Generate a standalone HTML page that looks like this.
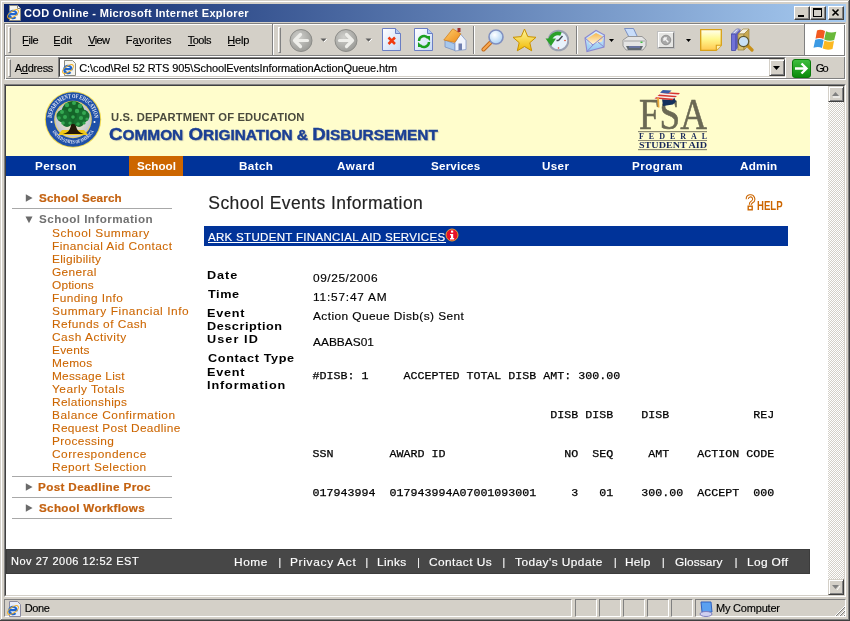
<!DOCTYPE html><html><head><meta charset="utf-8"><style>
*{margin:0;padding:0;box-sizing:border-box}
html,body{width:850px;height:621px;overflow:hidden;background:#d4d0c8;font-family:"Liberation Sans",sans-serif}
.a{position:absolute}
.t{position:absolute;white-space:pre;line-height:normal;-webkit-font-smoothing:antialiased}
.mono{position:absolute;white-space:pre;font-family:"Liberation Mono",monospace;font-size:11.667px;line-height:13px;color:#000;-webkit-text-stroke:0.25px #000}
</style></head><body><div class="a" style="left:0;top:0;width:850px;height:621px;will-change:transform"><div class="a" style="left:0px;top:0px;width:850px;height:621px;background:#d4d0c8"></div>
<div class="a" style="left:1px;top:1px;width:848px;height:1px;background:#fff"></div>
<div class="a" style="left:1px;top:1px;width:1px;height:618px;background:#fff"></div>
<div class="a" style="left:0px;top:620px;width:850px;height:1px;background:#404040"></div>
<div class="a" style="left:849px;top:0px;width:1px;height:621px;background:#404040"></div>
<div class="a" style="left:1px;top:619px;width:848px;height:1px;background:#808080"></div>
<div class="a" style="left:848px;top:1px;width:1px;height:619px;background:#808080"></div>
<div class="a" style="left:4px;top:4px;width:842px;height:18px;background:linear-gradient(to right,#0a246a,#a6caf0)"></div>
<svg class="a" style="left:6px;top:5px" width="16" height="16" viewBox="0 0 16 16">
<path d="M3.5 0.5h8l3 3v12h-11z" fill="#f4f4ee" stroke="#8a8a80"/>
<path d="M11.5 0.5v3h3" fill="#fff" stroke="#8a8a80"/>
<path d="M3.2 9.2h7.4a3.7 3.7 0 1 0-1.1 2.9" fill="none" stroke="#1f66d0" stroke-width="2.2"/>
<ellipse cx="7" cy="9" rx="6.3" ry="3" transform="rotate(-35 7 9)" fill="none" stroke="#f0b028" stroke-width="1"/>
</svg>
<div class="a" style="left:794px;top:6px;width:16px;height:14px;background:#d4d0c8;border-top:1px solid #fff;border-left:1px solid #fff;border-right:1px solid #404040;border-bottom:1px solid #404040;box-shadow:inset -1px -1px 0 #808080"></div>
<svg class="a" style="left:794px;top:6px" width="16" height="14" viewBox="0 0 16 14"><rect x="4" y="9" width="6" height="2" fill="#000"/></svg>
<div class="a" style="left:810px;top:6px;width:16px;height:14px;background:#d4d0c8;border-top:1px solid #fff;border-left:1px solid #fff;border-right:1px solid #404040;border-bottom:1px solid #404040;box-shadow:inset -1px -1px 0 #808080"></div>
<svg class="a" style="left:810px;top:6px" width="16" height="14" viewBox="0 0 16 14"><rect x="3.5" y="2.5" width="8" height="8" fill="none" stroke="#000"/><rect x="3" y="2" width="9" height="2" fill="#000"/></svg>
<div class="a" style="left:828px;top:6px;width:16px;height:14px;background:#d4d0c8;border-top:1px solid #fff;border-left:1px solid #fff;border-right:1px solid #404040;border-bottom:1px solid #404040;box-shadow:inset -1px -1px 0 #808080"></div>
<svg class="a" style="left:828px;top:6px" width="16" height="14" viewBox="0 0 16 14"><path d="M4.5 3.5l6 6M10.5 3.5l-6 6" stroke="#000" stroke-width="1.6"/></svg>
<div class="a" style="left:4px;top:23px;width:841px;height:56px;border-top:1px solid #808080;border-left:1px solid #808080;border-right:1px solid #808080;border-bottom:1px solid #808080"></div>
<div class="a" style="left:5px;top:24px;width:841px;height:56px;border-top:1px solid #fff;border-left:1px solid #fff;border-right:1px solid #fff;border-bottom:1px solid #fff"></div>
<div class="a" style="left:5px;top:55px;width:840px;height:1px;background:#808080"></div>
<div class="a" style="left:5px;top:56px;width:840px;height:1px;background:#fff"></div>
<div class="a" style="left:8px;top:27px;width:3px;height:26px;border-left:1px solid #fff;border-top:1px solid #fff;border-right:1px solid #808080;border-bottom:1px solid #808080"></div>
<div class="a" style="left:8px;top:59px;width:3px;height:18px;border-left:1px solid #fff;border-top:1px solid #fff;border-right:1px solid #808080;border-bottom:1px solid #808080"></div>
<div class="a" style="left:278px;top:27px;width:3px;height:26px;border-left:1px solid #fff;border-top:1px solid #fff;border-right:1px solid #808080;border-bottom:1px solid #808080"></div>
<div class="a" style="left:272px;top:24px;width:1px;height:31px;background:#808080"></div>
<div class="a" style="left:273px;top:24px;width:1px;height:31px;background:#fff"></div>
<div class="a" style="left:804px;top:24px;width:1px;height:31px;background:#808080"></div>
<div class="a" style="left:805px;top:24px;width:1px;height:31px;background:#fff"></div>
<div class="a" style="left:806px;top:24px;width:38px;height:31px;background:#fff"></div>
<div class="a" style="left:23px;top:45px;width:6px;height:1px;background:#000"></div>
<div class="a" style="left:54px;top:45px;width:6px;height:1px;background:#000"></div>
<div class="a" style="left:88px;top:45px;width:7px;height:1px;background:#000"></div>
<div class="a" style="left:135px;top:45px;width:6px;height:1px;background:#000"></div>
<div class="a" style="left:188px;top:45px;width:7px;height:1px;background:#000"></div>
<div class="a" style="left:228px;top:45px;width:7px;height:1px;background:#000"></div>
<div class="a" style="left:21px;top:73px;width:7px;height:1px;background:#000"></div>
<svg class="a" style="left:289px;top:29px" width="24" height="23" viewBox="0 0 24 23"><defs><radialGradient id="gb" cx="0.4" cy="0.35" r="0.7"><stop offset="0" stop-color="#d0d0cc"/><stop offset="1" stop-color="#999995"/></radialGradient></defs><circle cx="12" cy="11.5" r="11" fill="url(#gb)" stroke="#8c8c88"/><path d="M18.5 11.5H6M11.5 5.5l-6 6 6 6" stroke="#eeeeea" stroke-width="3.2" fill="none" stroke-linejoin="round" stroke-linecap="round"/></svg>
<svg class="a" style="left:320px;top:38px" width="7" height="5"><path d="M0.5 0.5h6l-3 3z" fill="#606060"/><path d="M4 4l3-3" stroke="#fff" stroke-width="1"/></svg>
<svg class="a" style="left:334px;top:29px" width="24" height="23" viewBox="0 0 24 23"><circle cx="12" cy="11.5" r="11" fill="url(#gb)" stroke="#8c8c88"/><path d="M5.5 11.5H18M12.5 5.5l6 6-6 6" stroke="#eeeeea" stroke-width="3.2" fill="none" stroke-linejoin="round" stroke-linecap="round"/></svg>
<svg class="a" style="left:365px;top:38px" width="7" height="5"><path d="M0.5 0.5h6l-3 3z" fill="#606060"/><path d="M4 4l3-3" stroke="#fff" stroke-width="1"/></svg>
<svg class="a" style="left:382px;top:28px" width="20" height="24" viewBox="0 0 20 24"><defs><linearGradient id="pg" x1="0" y1="0" x2="1" y2="1"><stop offset="0" stop-color="#ffffff"/><stop offset="1" stop-color="#c8daf6"/></linearGradient></defs><path d="M0.5 0.5h13l5 5v17h-18z" fill="url(#pg)" stroke="#6a7ec4"/><path d="M13.5 0.5v5h5" fill="#b0c8f0" stroke="#6a7ec4"/><path d="M6.5 9.5l6.5 6.5M13 9.5l-6.5 6.5" stroke="#f03a10" stroke-width="2.5"/></svg>
<svg class="a" style="left:414px;top:28px" width="20" height="24" viewBox="0 0 20 24"><path d="M0.5 0.5h13l5 5v17h-18z" fill="url(#pg)" stroke="#6a7ec4"/><path d="M13.5 0.5v5h5" fill="#b0c8f0" stroke="#6a7ec4"/><path d="M5 13a5 5 0 0 1 9-3" stroke="#1aa020" stroke-width="2.4" fill="none"/><path d="M15 14a5 5 0 0 1-9 3" stroke="#1aa020" stroke-width="2.4" fill="none"/><path d="M11 8h5v5z" fill="#1aa020"/><path d="M9 19H4v-5z" fill="#1aa020"/></svg>
<svg class="a" style="left:443px;top:27px" width="24" height="25" viewBox="0 0 24 25"><defs><linearGradient id="rf" x1="0" y1="0" x2="1" y2="1"><stop offset="0" stop-color="#fcd070"/><stop offset="1" stop-color="#f08a18"/></linearGradient></defs><path d="M2 13l10 4v6.5L2 20z" fill="#a8c8ec" stroke="#7890c0" stroke-width="0.8"/><path d="M12 15.5l5.5-8.5 5.5 6.5v9l-11 1.5z" fill="#f0f4fc" stroke="#8098c8" stroke-width="0.8"/><path d="M15.5 16.5h3.5v6.5h-3.5z" fill="#7080b0"/><path d="M0.8 13l9-11.2 8 5-6 8.5z" fill="url(#rf)" stroke="#d08020" stroke-width="0.8"/><rect x="14.5" y="1" width="3" height="4" fill="#a03030"/></svg>
<div class="a" style="left:473px;top:26px;width:1px;height:28px;background:#808080"></div>
<div class="a" style="left:474px;top:26px;width:1px;height:28px;background:#fff"></div>
<svg class="a" style="left:481px;top:29px" width="24" height="23" viewBox="0 0 24 23"><defs><radialGradient id="ls" cx="0.4" cy="0.35" r="0.7"><stop offset="0" stop-color="#ffffff"/><stop offset="1" stop-color="#a8d0f4"/></radialGradient><linearGradient id="st" x1="0" y1="0" x2="0" y2="1"><stop offset="0" stop-color="#fff8a0"/><stop offset="1" stop-color="#f0b800"/></linearGradient></defs><path d="M9.5 13.5L2.5 20.5" stroke="#c06818" stroke-width="4" stroke-linecap="round"/><path d="M9.5 13.5L2.5 20.5" stroke="#f8a850" stroke-width="2.2" stroke-linecap="round"/><circle cx="15" cy="8" r="7" fill="url(#ls)" stroke="#8090c0" stroke-width="1.6"/></svg>
<svg class="a" style="left:512px;top:28px" width="25" height="24" viewBox="0 0 25 24"><path d="M12.5 1l3.3 7.6 8.2.7-6.2 5.4 1.9 8.1-7.2-4.3-7.2 4.3 1.9-8.1L1 9.3l8.2-.7z" fill="url(#st)" stroke="#c89000"/></svg>
<svg class="a" style="left:545px;top:29px" width="24" height="23" viewBox="0 0 24 23"><circle cx="13.5" cy="11.5" r="9.8" fill="#e8f2fc" stroke="#9aa0b0" stroke-width="2"/><path d="M13.5 11.5l4-4.5M13.5 11.5h-2" stroke="#404850" stroke-width="1.4"/><circle cx="20" cy="11.5" r="0.8" fill="#e04020"/><circle cx="13.5" cy="19" r="0.8" fill="#e04020"/><path d="M5 12a8 8 0 0 1 11-7" stroke="#2aa02a" stroke-width="3.6" fill="none"/><path d="M0.5 9.5l5.5 7.5 5-7.5z" fill="#2aa02a"/></svg>
<div class="a" style="left:576px;top:26px;width:1px;height:28px;background:#808080"></div>
<div class="a" style="left:577px;top:26px;width:1px;height:28px;background:#fff"></div>
<svg class="a" style="left:584px;top:28px" width="22" height="25" viewBox="0 0 22 25"><defs><linearGradient id="ml" x1="0" y1="0" x2="0" y2="1"><stop offset="0" stop-color="#e0f0ff"/><stop offset="1" stop-color="#90c8f0"/></linearGradient><linearGradient id="mo" x1="0" y1="0" x2="0" y2="1"><stop offset="0" stop-color="#f8b850"/><stop offset="1" stop-color="#fff8e0"/></linearGradient></defs><path d="M1 10L12 2.5 20.5 7 20 19 3 23.5z" fill="url(#ml)" stroke="#8a88d0" stroke-width="1.1"/><path d="M3 10.5L12 5l7 3.5-1 5-12 3z" fill="url(#mo)"/><path d="M1 10l8 7 11.5-9.5M3 23.5l6-6.5M20 19l-6-5" fill="none" stroke="#8a88d0" stroke-width="1"/></svg>
<svg class="a" style="left:609px;top:39px" width="5" height="3"><path d="M0 0h5l-2.5 3z" fill="#000"/></svg>
<svg class="a" style="left:622px;top:28px" width="25" height="24" viewBox="0 0 25 24"><path d="M2.5 0.5h9l4 8.5H7z" fill="#c8ddfa" stroke="#7088c0" stroke-width="0.9"/><path d="M1 12l5-3.5h14l4 3.5v6l-3 4H4l-3-4z" fill="#e4e4e4" stroke="#909090" stroke-width="0.9"/><path d="M1 12h23v2H1z" fill="#c4c4c4"/><path d="M4 18h17l-2 4H6z" fill="#606870"/><path d="M7 19h11" stroke="#7080d0" stroke-width="1"/><rect x="18.5" y="13.5" width="2" height="1.5" fill="#40c040"/></svg>
<div class="a" style="left:658px;top:32px;width:16px;height:16px;background:#e6e6e4;border-top:1px solid #fff;border-left:1px solid #fff;border-right:1px solid #808080;border-bottom:1px solid #808080;box-shadow:0 0 0 1px #c0c0c0"></div>
<svg class="a" style="left:658px;top:32px" width="16" height="16" viewBox="0 0 16 16"><circle cx="8" cy="8" r="4.8" fill="#a8a8a8" stroke="#888" stroke-width="0.8"/><path d="M6.3 6.3l4 4M6 6h3M6 6v3" stroke="#f4f4f4" stroke-width="1.4"/></svg>
<svg class="a" style="left:686px;top:39px" width="5" height="3"><path d="M0 0h5l-2.5 3z" fill="#000"/></svg>
<svg class="a" style="left:700px;top:29px" width="23" height="23" viewBox="0 0 23 23"><defs><linearGradient id="gn" x1="0" y1="0" x2="0" y2="1"><stop offset="0" stop-color="#fffff0"/><stop offset="0.45" stop-color="#fff890"/><stop offset="1" stop-color="#ffc850"/></linearGradient></defs><path d="M0.7 0.7h20.6v15.6l-5 5H0.7z" fill="url(#gn)" stroke="#d8a018" stroke-width="1.3"/><path d="M16.3 21.3v-5h5" fill="#fff0b0" stroke="#d8a018" stroke-width="1.1"/></svg>
<svg class="a" style="left:730px;top:28px" width="24" height="24" viewBox="0 0 24 24"><path d="M1.5 6l5-5h3l-5 5z" fill="#dde0f8" stroke="#5060b0" stroke-width="0.7"/><path d="M1.5 6h4v16.5h-4z" fill="#7070d8" stroke="#4048a8" stroke-width="0.8"/><path d="M5.5 6l5-5v16l-5 5.5z" fill="#5a5ac0"/><path d="M8 6l5-5h6l-5 5z" fill="#f4f0e0" stroke="#a08840" stroke-width="0.7"/><path d="M8 6h6v16H8z" fill="#d8c070" stroke="#a08840" stroke-width="0.8"/><path d="M14 6l5-5v16l-5 5z" fill="#c8a850" stroke="#a08840" stroke-width="0.7"/><path d="M16.5 16.5l5.5 5.5" stroke="#c89018" stroke-width="3.2" stroke-linecap="round"/><circle cx="13.5" cy="13.5" r="5.2" fill="#c8e0f4" stroke="#605830" stroke-width="1.2"/></svg>
<svg class="a" style="left:813px;top:29px" width="24" height="21" viewBox="0 0 24 21"><path d="M4 1.5C6 0.5 9 0.5 12 2L10.5 10C8 8.7 5 8.7 2.5 9.8Z" fill="#f25a20"/><path d="M13 2.3C16 3.8 19.5 4 23.3 2.8L21.2 11C18 12.2 14.5 12 11.2 10.5Z" fill="#69b83a"/><path d="M2.2 10.8C5 9.7 8 9.7 10.6 11L9 19C6.5 17.5 3.5 17.6 0.5 18.8Z" fill="#3c9ae4"/><path d="M11.5 11.5C14.5 13 18 13.2 21 12L19.5 20C16 21 12.5 20.8 9.7 19.5Z" fill="#fcb820"/></svg>
<div class="a" style="left:58px;top:57px;width:728px;height:21px;border-top:1px solid #808080;border-left:1px solid #808080;border-right:1px solid #fff;border-bottom:1px solid #fff;background:#fff"></div>
<div class="a" style="left:59px;top:58px;width:726px;height:19px;border-top:1px solid #404040;border-left:1px solid #404040;border-right:1px solid #d4d0c8;border-bottom:1px solid #d4d0c8"></div>
<svg class="a" style="left:61px;top:60px" width="16" height="16" viewBox="0 0 16 16"><path d="M3.5 0.5h8l3 3v12h-11z" fill="#f4f4ee" stroke="#8a8a80"/><path d="M3.2 9.2h7.4a3.7 3.7 0 1 0-1.1 2.9" fill="none" stroke="#1f66d0" stroke-width="2.2"/><ellipse cx="7" cy="9" rx="6.3" ry="3" transform="rotate(-35 7 9)" fill="none" stroke="#f0b028" stroke-width="1"/></svg>
<div class="a" style="left:769px;top:59px;width:16px;height:17px;background:#d4d0c8;border-top:1px solid #d4d0c8;border-left:1px solid #d4d0c8;border-right:1px solid #404040;border-bottom:1px solid #404040;box-shadow:inset 1px 1px 0 #fff,inset -1px -1px 0 #808080"></div>
<svg class="a" style="left:773px;top:66px" width="7" height="4"><path d="M0 0h7l-3.5 4z" fill="#000"/></svg>
<svg class="a" style="left:792px;top:59px" width="19" height="19" viewBox="0 0 19 19"><defs><linearGradient id="gg" x1="0" y1="0" x2="0" y2="1"><stop offset="0" stop-color="#40c040"/><stop offset="1" stop-color="#088a08"/></linearGradient></defs><rect x="0.5" y="0.5" width="18" height="18" rx="2.5" fill="url(#gg)" stroke="#0a7a0a"/><path d="M3 9.5h11M9.5 4.5l5 5-5 5" stroke="#fff" stroke-width="2.4" fill="none"/></svg>
<div class="a" style="left:4px;top:84px;width:842px;height:513px;border-top:1px solid #808080;border-left:1px solid #808080;border-right:1px solid #fff;border-bottom:1px solid #fff"></div>
<div class="a" style="left:5px;top:85px;width:840px;height:511px;border-top:1px solid #404040;border-left:1px solid #404040;border-right:1px solid #d4d0c8;border-bottom:1px solid #d4d0c8;background:#fff"></div>
<div class="a" style="left:828px;top:86px;width:16px;height:509px;background-color:#fff;background-image:repeating-conic-gradient(#d4d0c8 0 25%,#fff 0 50%);background-size:2px 2px"></div>
<div class="a" style="left:828px;top:86px;width:16px;height:16px;background:#d4d0c8;border-top:1px solid #d4d0c8;border-left:1px solid #d4d0c8;border-right:1px solid #404040;border-bottom:1px solid #404040;box-shadow:inset 1px 1px 0 #fff,inset -1px -1px 0 #808080"></div>
<svg class="a" style="left:828px;top:86px" width="16" height="16"><path d="M4 10h7l-3.5-4z" fill="#808080"/><path d="M5 11h7" stroke="#fff" stroke-width="1"/></svg>
<div class="a" style="left:828px;top:579px;width:16px;height:16px;background:#d4d0c8;border-top:1px solid #d4d0c8;border-left:1px solid #d4d0c8;border-right:1px solid #404040;border-bottom:1px solid #404040;box-shadow:inset 1px 1px 0 #fff,inset -1px -1px 0 #808080"></div>
<svg class="a" style="left:828px;top:579px" width="16" height="16"><path d="M4 6h7l-3.5 4z" fill="#808080"/><path d="M9 11l3-4" stroke="#fff" stroke-width="1"/></svg>
<div class="a" style="left:6px;top:86px;width:804px;height:70px;background:#fffdcc"></div>
<svg class="a" style="left:44px;top:91px" width="58" height="58" viewBox="0 0 58 58">
<defs><radialGradient id="sr" cx="0.5" cy="0.5" r="0.5"><stop offset="0.3" stop-color="#f4ecc0"/><stop offset="1" stop-color="#c0c4d8"/></radialGradient>
<path id="arcT" d="M7.5 28.5a21.5 21.5 0 0 1 43 0"/><path id="arcB" d="M5 28.5a24 24 0 0 0 48 0"/></defs>
<circle cx="29" cy="28.5" r="28.2" fill="#f0d850"/>
<circle cx="29" cy="28.5" r="27.2" fill="#1f50a8"/>
<text font-family="Liberation Serif" font-weight="bold" font-size="6.2" fill="#f0f0f8"><textPath href="#arcT" startOffset="50%" text-anchor="middle" textLength="64" lengthAdjust="spacingAndGlyphs">DEPARTMENT OF EDUCATION</textPath></text>
<text font-family="Liberation Serif" font-weight="bold" font-size="5" fill="#f0f0f8"><textPath href="#arcB" startOffset="50%" text-anchor="middle" textLength="50" lengthAdjust="spacingAndGlyphs">UNITED STATES OF AMERICA</textPath></text>
<circle cx="7.5" cy="31" r="1" fill="#fff"/><circle cx="50.5" cy="31" r="1" fill="#fff"/>
<circle cx="29" cy="28.5" r="18.8" fill="#e8d060"/>
<circle cx="29" cy="28.5" r="17.8" fill="url(#sr)"/>
<path d="M14 44h30l-4-5H18z" fill="#f0c818"/>
<path d="M19 43c4-1 7-3 8-9l1-6h3l1 7c1 5 4 7 8 8z" fill="#241808"/>
<circle cx="29" cy="21.5" r="11.5" fill="#146428"/>
<circle cx="19" cy="25" r="6.5" fill="#187030"/><circle cx="39" cy="25" r="6.5" fill="#187030"/>
<circle cx="23" cy="31" r="5" fill="#187030"/><circle cx="35" cy="31" r="5" fill="#187030"/>
<g fill="#35a852">
<circle cx="23" cy="14" r="2.2"/><circle cx="30" cy="12" r="2"/><circle cx="36" cy="15" r="2.3"/><circle cx="18" cy="21" r="2"/><circle cx="26" cy="19" r="2"/>
<circle cx="33" cy="20" r="2.2"/><circle cx="40" cy="22" r="2"/><circle cx="15" cy="27" r="1.8"/><circle cx="21" cy="26" r="2"/><circle cx="29" cy="26" r="1.8"/>
<circle cx="37" cy="27" r="2.1"/><circle cx="43" cy="28" r="1.6"/><circle cx="19" cy="32" r="1.8"/><circle cx="26" cy="32" r="1.6"/><circle cx="34" cy="33" r="1.8"/><circle cx="40" cy="32" r="1.6"/>
</g>
</svg>
<div class="t" style="left:109.2px;top:124.5px;font-size:17px;font-weight:bold;color:#1b3f94;letter-spacing:0px;transform-origin:0 0;transform:scaleX(1.1);-webkit-text-stroke:0.4px #1b3f94;text-shadow:1px 1px 1px rgba(40,40,80,0.25)" id="cod"><span>C</span><span style="font-size:14px">OMMON</span> <span>O</span><span style="font-size:14px">RIGINATION &amp; </span><span>D</span><span style="font-size:14px">ISBURSEMENT</span></div>
<svg class="a" style="left:636px;top:88px" width="74" height="64" viewBox="0 0 74 64">
<text x="37" y="41.3" font-family="Liberation Serif" font-size="45" fill="#6b6954" text-anchor="middle" textLength="68" lengthAdjust="spacingAndGlyphs" stroke="#6b6954" stroke-width="0.6">FSA</text>
<rect x="2" y="43" width="69" height="1.2" fill="#8d8b72"/>
<text x="37" y="51" font-family="Liberation Serif" font-size="8" font-weight="bold" fill="#18285a" text-anchor="middle" textLength="68" lengthAdjust="spacing">FEDERAL</text>
<rect x="2" y="52" width="69" height="1" fill="#8d8b72"/>
<text x="37" y="59.5" font-family="Liberation Serif" font-size="8" font-weight="bold" fill="#18285a" text-anchor="middle" textLength="68" lengthAdjust="spacingAndGlyphs">STUDENT AID</text>
<rect x="2" y="61" width="69" height="1.2" fill="#8d8b72"/>
<path d="M26 10.5l12-1.5 2 4.5-3 3-10 1.5z" fill="#14305c"/>
<path d="M18 10.8l8-7 18 1.2-8 7z" fill="#f6f0ee"/>
<path d="M18.5 10.6l1.6-1.4 17.8 1.6-1.7 1.4z" fill="#d8342c"/>
<path d="M21.6 7.9l1.6-1.4 17.8 1.4-1.6 1.4z" fill="#d8342c"/>
<path d="M24.8 5.1l1.4-1.2 17.8 1.2-1.5 1.3z" fill="#d8342c"/>
<path d="M24 4.8l2.8-2.8 8.8.6-3.2 3z" fill="#3a5aa6"/>
<path d="M22 9.5l.6 10" stroke="#e8a838" stroke-width="1.8"/>
</svg>
<div class="a" style="left:6px;top:156px;width:804px;height:20px;background:#003399"></div>
<div class="a" style="left:129px;top:156px;width:54px;height:20px;background:#cc6600"></div>
<svg class="a" style="left:25px;top:194px" width="8" height="9"><path d="M0.8 0.3L7.6 4 0.8 7.7z" fill="#6a6a6a"/></svg>
<svg class="a" style="left:25px;top:216px" width="9" height="8"><path d="M0.5 0.5h7L4 7.2z" fill="#6a6a6a"/></svg>
<svg class="a" style="left:25px;top:483px" width="8" height="9"><path d="M0.8 0.3L7.6 4 0.8 7.7z" fill="#6a6a6a"/></svg>
<svg class="a" style="left:25px;top:504px" width="8" height="9"><path d="M0.8 0.3L7.6 4 0.8 7.7z" fill="#6a6a6a"/></svg>
<div class="a" style="left:12px;top:208px;width:160px;height:1px;background:#a8a8a8"></div>
<div class="a" style="left:12px;top:476px;width:160px;height:1px;background:#a8a8a8"></div>
<div class="a" style="left:12px;top:497px;width:160px;height:1px;background:#a8a8a8"></div>
<div class="a" style="left:12px;top:518px;width:160px;height:1px;background:#a8a8a8"></div>
<div class="a" style="left:204px;top:226px;width:584px;height:20px;background:#003399"></div>
<div class="a" style="left:208px;top:242px;width:238px;height:1px;background:#fff"></div>
<svg class="a" style="left:445px;top:228px" width="14" height="14" viewBox="0 0 14 14"><circle cx="7" cy="7" r="6" fill="#e8102a" stroke="#e8a030" stroke-width="1"/><rect x="6" y="2.6" width="2.2" height="2" fill="#fff"/><path d="M5 6h3.2v4h1v1.4H5V10h1V7.3H5z" fill="#fff"/></svg>
<svg class="a" style="left:745px;top:194px" width="11" height="17" viewBox="0 0 11 17"><path d="M2.3 5.2a3.2 3.2 0 1 1 4.8 2.6c-1.4.8-1.8 1.3-1.8 3" fill="none" stroke="#cc6600" stroke-width="3.2"/><path d="M2.3 5.2a3.2 3.2 0 1 1 4.8 2.6c-1.4.8-1.8 1.3-1.8 3" fill="none" stroke="#fff" stroke-width="1.1"/><rect x="3.2" y="12.2" width="4" height="3.6" fill="#fff" stroke="#cc6600" stroke-width="1.4"/></svg>
<div class="t" style="left:757px;top:200px;font-size:12px;font-weight:bold;color:#cc6600;line-height:12px;transform-origin:0 0;transform:scaleX(0.8)">HELP</div>
<div class="mono" style="left:312.5px;top:370px">#DISB: 1     ACCEPTED TOTAL DISB AMT: 300.00</div>
<div class="mono" style="left:312.5px;top:409px">                                  DISB DISB    DISB            REJ</div>
<div class="mono" style="left:312.5px;top:448px">SSN        AWARD ID                 NO  SEQ     AMT    ACTION CODE</div>
<div class="mono" style="left:312.5px;top:487px">017943994  017943994A07001093001     3   01    300.00  ACCEPT  000</div>
<div class="a" style="left:6px;top:549px;width:804px;height:25px;background:#474747;border:1px solid #3c3c3c"></div>
<div class="a" style="left:4px;top:599px;width:568px;height:18px;border-top:1px solid #808080;border-left:1px solid #808080;border-right:1px solid #fff;border-bottom:1px solid #fff"></div>
<div class="a" style="left:575px;top:599px;width:22px;height:18px;border-top:1px solid #808080;border-left:1px solid #808080;border-right:1px solid #fff;border-bottom:1px solid #fff"></div>
<div class="a" style="left:599px;top:599px;width:22px;height:18px;border-top:1px solid #808080;border-left:1px solid #808080;border-right:1px solid #fff;border-bottom:1px solid #fff"></div>
<div class="a" style="left:623px;top:599px;width:22px;height:18px;border-top:1px solid #808080;border-left:1px solid #808080;border-right:1px solid #fff;border-bottom:1px solid #fff"></div>
<div class="a" style="left:647px;top:599px;width:22px;height:18px;border-top:1px solid #808080;border-left:1px solid #808080;border-right:1px solid #fff;border-bottom:1px solid #fff"></div>
<div class="a" style="left:671px;top:599px;width:22px;height:18px;border-top:1px solid #808080;border-left:1px solid #808080;border-right:1px solid #fff;border-bottom:1px solid #fff"></div>
<div class="a" style="left:695px;top:599px;width:151px;height:18px;border-top:1px solid #808080;border-left:1px solid #808080;border-right:1px solid #fff;border-bottom:1px solid #fff"></div>
<svg class="a" style="left:6px;top:601px" width="16" height="16" viewBox="0 0 16 16"><path d="M3.5 0.5h8l3 3v12h-11z" fill="#e8ecf8" stroke="#8a8aa0"/><path d="M3.2 9.2h7.4a3.7 3.7 0 1 0-1.1 2.9" fill="none" stroke="#1f66d0" stroke-width="2.2"/><ellipse cx="7" cy="9" rx="6.3" ry="3" transform="rotate(-35 7 9)" fill="none" stroke="#f0b028" stroke-width="1"/></svg>
<svg class="a" style="left:699px;top:601px" width="14" height="16" viewBox="0 0 14 16"><path d="M2 1h10l1 10H3z" fill="#5aa0f0" stroke="#3060c0"/><ellipse cx="7" cy="13" rx="6" ry="2.5" fill="#d0d0f0" stroke="#8080c0"/></svg>
<svg class="a" style="left:834px;top:605px" width="12" height="12"><path d="M11 1L1 11M11 5L5 11M11 9L9 11" stroke="#fff" stroke-width="1"/><path d="M11 2L2 11M11 6L6 11M11 10L10 11" stroke="#808080" stroke-width="1"/></svg>
<div class="t" style='left:24.0px;top:8px;font-size:11px;font-weight:bold;color:#fff;letter-spacing:0.321px;line-height:11px'>COD Online - Microsoft Internet Explorer</div>
<div class="t" style='left:22.0px;top:35px;font-size:11px;font-weight:normal;color:#000;letter-spacing:-0.333px;line-height:11px;-webkit-text-stroke:0.15px #000'>File</div>
<div class="t" style='left:53.3px;top:35px;font-size:11px;font-weight:normal;color:#000;letter-spacing:-0.1px;line-height:11px;-webkit-text-stroke:0.15px #000'>Edit</div>
<div class="t" style='left:88.3px;top:35px;font-size:11px;font-weight:normal;color:#000;letter-spacing:-0.667px;line-height:11px;-webkit-text-stroke:0.15px #000'>View</div>
<div class="t" style='left:125.8px;top:35px;font-size:11px;font-weight:normal;color:#000;letter-spacing:0.063px;line-height:11px;-webkit-text-stroke:0.15px #000'>Favorites</div>
<div class="t" style='left:187.7px;top:35px;font-size:11px;font-weight:normal;color:#000;letter-spacing:-0.475px;line-height:11px;-webkit-text-stroke:0.15px #000'>Tools</div>
<div class="t" style='left:227.3px;top:35px;font-size:11px;font-weight:normal;color:#000;letter-spacing:-0.2px;line-height:11px;-webkit-text-stroke:0.15px #000'>Help</div>
<div class="t" style='left:14.8px;top:63px;font-size:11px;font-weight:normal;color:#000;letter-spacing:-0.3px;line-height:11px;-webkit-text-stroke:0.15px #000'>Address</div>
<div class="t" style='left:79.2px;top:63px;font-size:11px;font-weight:normal;color:#000;letter-spacing:-0.088px;line-height:11px;-webkit-text-stroke:0.15px #000'>C:\cod\Rel 52 RTS 905\SchoolEventsInformationActionQueue.htm</div>
<div class="t" style='left:815.7px;top:63px;font-size:11px;font-weight:normal;color:#000;letter-spacing:-1.7px;line-height:11px;-webkit-text-stroke:0.15px #000'>Go</div>
<div class="t" style='left:24.7px;top:603px;font-size:11px;font-weight:normal;color:#000;letter-spacing:-0.367px;line-height:11px;-webkit-text-stroke:0.15px #000'>Done</div>
<div class="t" style='left:716.0px;top:603px;font-size:11px;font-weight:normal;color:#000;letter-spacing:-0.2px;line-height:11px;-webkit-text-stroke:0.15px #000'>My Computer</div>
<div class="t" style='left:111.08px;top:113px;font-size:10px;font-weight:bold;color:#4a4a3e;letter-spacing:0.134px;line-height:10px;transform-origin:0 0;transform:scaleX(1.12)'>U.S. DEPARTMENT OF EDUCATION</div>
<div class="t" style='left:34.64px;top:161px;font-size:11px;font-weight:bold;color:#fff;letter-spacing:0.347px;line-height:11px;transform-origin:0 0;transform:scaleX(1.06)'>Person</div>
<div class="t" style='left:136.8px;top:161px;font-size:11px;font-weight:bold;color:#fff;letter-spacing:0.008px;line-height:11px;transform-origin:0 0;transform:scaleX(1.06)'>School</div>
<div class="t" style='left:238.74px;top:161px;font-size:11px;font-weight:bold;color:#fff;letter-spacing:0.344px;line-height:11px;transform-origin:0 0;transform:scaleX(1.06)'>Batch</div>
<div class="t" style='left:337.0px;top:161px;font-size:11px;font-weight:bold;color:#fff;letter-spacing:0.547px;line-height:11px;transform-origin:0 0;transform:scaleX(1.06)'>Award</div>
<div class="t" style='left:431.0px;top:161px;font-size:11px;font-weight:bold;color:#fff;letter-spacing:0.175px;line-height:11px;transform-origin:0 0;transform:scaleX(1.06)'>Services</div>
<div class="t" style='left:541.94px;top:161px;font-size:11px;font-weight:bold;color:#fff;letter-spacing:0.333px;line-height:11px;transform-origin:0 0;transform:scaleX(1.06)'>User</div>
<div class="t" style='left:631.64px;top:161px;font-size:11px;font-weight:bold;color:#fff;letter-spacing:0.418px;line-height:11px;transform-origin:0 0;transform:scaleX(1.06)'>Program</div>
<div class="t" style='left:740.0px;top:161px;font-size:11px;font-weight:bold;color:#fff;letter-spacing:0.226px;line-height:11px;transform-origin:0 0;transform:scaleX(1.06)'>Admin</div>
<div class="t" style='left:39.0px;top:193px;font-size:11px;font-weight:bold;color:#c46210;letter-spacing:0.129px;line-height:11px;transform-origin:0 0;transform:scaleX(1.06);-webkit-text-stroke:0.2px #c46210'>School Search</div>
<div class="t" style='left:39.0px;top:214px;font-size:11px;font-weight:bold;color:#707070;letter-spacing:0.411px;line-height:11px;transform-origin:0 0;transform:scaleX(1.06)'>School Information</div>
<div class="t" style='left:52.2px;top:228px;font-size:11px;font-weight:normal;color:#cc6600;letter-spacing:0.474px;line-height:11px;transform-origin:0 0;transform:scaleX(1.08);-webkit-text-stroke:0.08px #cc6600'>School Summary</div>
<div class="t" style='left:52.2px;top:241px;font-size:11px;font-weight:normal;color:#cc6600;letter-spacing:0.386px;line-height:11px;transform-origin:0 0;transform:scaleX(1.08);-webkit-text-stroke:0.08px #cc6600'>Financial Aid Contact</div>
<div class="t" style='left:52.2px;top:254px;font-size:11px;font-weight:normal;color:#cc6600;letter-spacing:0.254px;line-height:11px;transform-origin:0 0;transform:scaleX(1.08);-webkit-text-stroke:0.08px #cc6600'>Eligibility</div>
<div class="t" style='left:52.2px;top:267px;font-size:11px;font-weight:normal;color:#cc6600;letter-spacing:0.321px;line-height:11px;transform-origin:0 0;transform:scaleX(1.08);-webkit-text-stroke:0.08px #cc6600'>General</div>
<div class="t" style='left:52.2px;top:280px;font-size:11px;font-weight:normal;color:#cc6600;letter-spacing:0.133px;line-height:11px;transform-origin:0 0;transform:scaleX(1.08);-webkit-text-stroke:0.08px #cc6600'>Options</div>
<div class="t" style='left:52.2px;top:293px;font-size:11px;font-weight:normal;color:#cc6600;letter-spacing:0.396px;line-height:11px;transform-origin:0 0;transform:scaleX(1.08);-webkit-text-stroke:0.08px #cc6600'>Funding Info</div>
<div class="t" style='left:52.2px;top:306px;font-size:11px;font-weight:normal;color:#cc6600;letter-spacing:0.524px;line-height:11px;transform-origin:0 0;transform:scaleX(1.08);-webkit-text-stroke:0.08px #cc6600'>Summary Financial Info</div>
<div class="t" style='left:52.2px;top:319px;font-size:11px;font-weight:normal;color:#cc6600;letter-spacing:0.41px;line-height:11px;transform-origin:0 0;transform:scaleX(1.08);-webkit-text-stroke:0.08px #cc6600'>Refunds of Cash</div>
<div class="t" style='left:52.2px;top:332px;font-size:11px;font-weight:normal;color:#cc6600;letter-spacing:0.481px;line-height:11px;transform-origin:0 0;transform:scaleX(1.08);-webkit-text-stroke:0.08px #cc6600'>Cash Activity</div>
<div class="t" style='left:52.2px;top:345px;font-size:11px;font-weight:normal;color:#cc6600;letter-spacing:0.215px;line-height:11px;transform-origin:0 0;transform:scaleX(1.08);-webkit-text-stroke:0.08px #cc6600'>Events</div>
<div class="t" style='left:52.2px;top:358px;font-size:11px;font-weight:normal;color:#cc6600;letter-spacing:0.301px;line-height:11px;transform-origin:0 0;transform:scaleX(1.08);-webkit-text-stroke:0.08px #cc6600'>Memos</div>
<div class="t" style='left:52.2px;top:371px;font-size:11px;font-weight:normal;color:#cc6600;letter-spacing:0.209px;line-height:11px;transform-origin:0 0;transform:scaleX(1.08);-webkit-text-stroke:0.08px #cc6600'>Message List</div>
<div class="t" style='left:52.2px;top:384px;font-size:11px;font-weight:normal;color:#cc6600;letter-spacing:0.435px;line-height:11px;transform-origin:0 0;transform:scaleX(1.08);-webkit-text-stroke:0.08px #cc6600'>Yearly Totals</div>
<div class="t" style='left:52.2px;top:397px;font-size:11px;font-weight:normal;color:#cc6600;letter-spacing:0.278px;line-height:11px;transform-origin:0 0;transform:scaleX(1.08);-webkit-text-stroke:0.08px #cc6600'>Relationships</div>
<div class="t" style='left:52.2px;top:410px;font-size:11px;font-weight:normal;color:#cc6600;letter-spacing:0.462px;line-height:11px;transform-origin:0 0;transform:scaleX(1.08);-webkit-text-stroke:0.08px #cc6600'>Balance Confirmation</div>
<div class="t" style='left:52.2px;top:423px;font-size:11px;font-weight:normal;color:#cc6600;letter-spacing:0.311px;line-height:11px;transform-origin:0 0;transform:scaleX(1.08);-webkit-text-stroke:0.08px #cc6600'>Request Post Deadline</div>
<div class="t" style='left:52.2px;top:436px;font-size:11px;font-weight:normal;color:#cc6600;letter-spacing:0.315px;line-height:11px;transform-origin:0 0;transform:scaleX(1.08);-webkit-text-stroke:0.08px #cc6600'>Processing</div>
<div class="t" style='left:52.2px;top:449px;font-size:11px;font-weight:normal;color:#cc6600;letter-spacing:0.456px;line-height:11px;transform-origin:0 0;transform:scaleX(1.08);-webkit-text-stroke:0.08px #cc6600'>Correspondence</div>
<div class="t" style='left:52.2px;top:462px;font-size:11px;font-weight:normal;color:#cc6600;letter-spacing:0.395px;line-height:11px;transform-origin:0 0;transform:scaleX(1.08);-webkit-text-stroke:0.08px #cc6600'>Report Selection</div>
<div class="t" style='left:37.94px;top:482px;font-size:11px;font-weight:bold;color:#c46210;letter-spacing:0.347px;line-height:11px;transform-origin:0 0;transform:scaleX(1.06);-webkit-text-stroke:0.2px #c46210'>Post Deadline Proc</div>
<div class="t" style='left:39.0px;top:503px;font-size:11px;font-weight:bold;color:#c46210;letter-spacing:0.302px;line-height:11px;transform-origin:0 0;transform:scaleX(1.06);-webkit-text-stroke:0.2px #c46210'>School Workflows</div>
<div class="t" style='left:208.3px;top:195px;font-size:17.5px;font-weight:normal;color:#222;letter-spacing:0.425px;line-height:17.5px;-webkit-text-stroke:0.15px #222'>School Events Information</div>
<div class="t" style='left:207.7px;top:232px;font-size:11px;font-weight:normal;color:#fff;letter-spacing:0.273px;line-height:11px;transform-origin:0 0;transform:scaleX(1.05);-webkit-text-stroke:0.15px #fff'>ARK STUDENT FINANCIAL AID SERVICES</div>
<div class="t" style='left:206.55px;top:270px;font-size:11px;font-weight:bold;color:#000;letter-spacing:0.797px;line-height:11px;transform-origin:0 0;transform:scaleX(1.15)'>Date</div>
<div class="t" style='left:207.7px;top:289px;font-size:11px;font-weight:bold;color:#000;letter-spacing:0.536px;line-height:11px;transform-origin:0 0;transform:scaleX(1.15)'>Time</div>
<div class="t" style='left:206.55px;top:308px;font-size:11px;font-weight:bold;color:#000;letter-spacing:0.641px;line-height:11px;transform-origin:0 0;transform:scaleX(1.15)'>Event</div>
<div class="t" style='left:206.55px;top:321px;font-size:11px;font-weight:bold;color:#000;letter-spacing:0.474px;line-height:11px;transform-origin:0 0;transform:scaleX(1.15)'>Description</div>
<div class="t" style='left:206.55px;top:334px;font-size:11px;font-weight:bold;color:#000;letter-spacing:0.949px;line-height:11px;transform-origin:0 0;transform:scaleX(1.15)'>User ID</div>
<div class="t" style='left:207.7px;top:353px;font-size:11px;font-weight:bold;color:#000;letter-spacing:0.549px;line-height:11px;transform-origin:0 0;transform:scaleX(1.15)'>Contact Type</div>
<div class="t" style='left:206.55px;top:367px;font-size:11px;font-weight:bold;color:#000;letter-spacing:0.641px;line-height:11px;transform-origin:0 0;transform:scaleX(1.15)'>Event</div>
<div class="t" style='left:206.55px;top:380px;font-size:11px;font-weight:bold;color:#000;letter-spacing:0.761px;line-height:11px;transform-origin:0 0;transform:scaleX(1.15)'>Information</div>
<div class="t" style='left:313.0px;top:273px;font-size:11px;font-weight:normal;color:#000;letter-spacing:0.535px;line-height:11px;transform-origin:0 0;transform:scaleX(1.08);-webkit-text-stroke:0.15px #000'>09/25/2006</div>
<div class="t" style='left:313.0px;top:292px;font-size:11px;font-weight:normal;color:#000;letter-spacing:0.73px;line-height:11px;transform-origin:0 0;transform:scaleX(1.08);-webkit-text-stroke:0.15px #000'>11:57:47 AM</div>
<div class="t" style='left:313.0px;top:311px;font-size:11px;font-weight:normal;color:#000;letter-spacing:0.394px;line-height:11px;transform-origin:0 0;transform:scaleX(1.08);-webkit-text-stroke:0.15px #000'>Action Queue Disb(s) Sent</div>
<div class="t" style='left:313.0px;top:337px;font-size:11px;font-weight:normal;color:#000;letter-spacing:0.016px;line-height:11px;transform-origin:0 0;transform:scaleX(1.08);-webkit-text-stroke:0.15px #000'>AABBAS01</div>
<div class="t" style='left:11.1px;top:557px;font-size:10px;font-weight:normal;color:#fff;letter-spacing:0.464px;line-height:10px;transform-origin:0 0;transform:scaleX(1.1);-webkit-text-stroke:0.15px #fff'>Nov 27 2006 12:52 EST</div>
<div class="t" style='left:234.32px;top:557px;font-size:11px;font-weight:normal;color:#fff;letter-spacing:0.512px;line-height:11px;transform-origin:0 0;transform:scaleX(1.08);-webkit-text-stroke:0.15px #fff'>Home</div>
<div class="t" style='left:289.92px;top:557px;font-size:11px;font-weight:normal;color:#fff;letter-spacing:0.644px;line-height:11px;transform-origin:0 0;transform:scaleX(1.08);-webkit-text-stroke:0.15px #fff'>Privacy Act</div>
<div class="t" style='left:376.62px;top:557px;font-size:11px;font-weight:normal;color:#fff;letter-spacing:0.347px;line-height:11px;transform-origin:0 0;transform:scaleX(1.08);-webkit-text-stroke:0.15px #fff'>Links</div>
<div class="t" style='left:429.42px;top:557px;font-size:11px;font-weight:normal;color:#fff;letter-spacing:0.397px;line-height:11px;transform-origin:0 0;transform:scaleX(1.08);-webkit-text-stroke:0.15px #fff'>Contact Us</div>
<div class="t" style='left:515.4px;top:557px;font-size:11px;font-weight:normal;color:#fff;letter-spacing:0.413px;line-height:11px;transform-origin:0 0;transform:scaleX(1.08);-webkit-text-stroke:0.15px #fff'>Today's Update</div>
<div class="t" style='left:625.42px;top:557px;font-size:11px;font-weight:normal;color:#fff;letter-spacing:0.253px;line-height:11px;transform-origin:0 0;transform:scaleX(1.08);-webkit-text-stroke:0.15px #fff'>Help</div>
<div class="t" style='left:675.0px;top:557px;font-size:11px;font-weight:normal;color:#fff;letter-spacing:0.063px;line-height:11px;transform-origin:0 0;transform:scaleX(1.08);-webkit-text-stroke:0.15px #fff'>Glossary</div>
<div class="t" style='left:746.92px;top:557px;font-size:11px;font-weight:normal;color:#fff;letter-spacing:0.34px;line-height:11px;transform-origin:0 0;transform:scaleX(1.08);-webkit-text-stroke:0.15px #fff'>Log Off</div>
<div class="t" style='left:278.5px;top:558px;font-size:10px;font-weight:normal;color:#fff;letter-spacing:0px;line-height:10px;-webkit-text-stroke:0.15px #fff'>|</div>
<div class="t" style='left:365.6px;top:558px;font-size:10px;font-weight:normal;color:#fff;letter-spacing:0px;line-height:10px;-webkit-text-stroke:0.15px #fff'>|</div>
<div class="t" style='left:417.3px;top:558px;font-size:10px;font-weight:normal;color:#fff;letter-spacing:0px;line-height:10px;-webkit-text-stroke:0.15px #fff'>|</div>
<div class="t" style='left:502.4px;top:558px;font-size:10px;font-weight:normal;color:#fff;letter-spacing:0px;line-height:10px;-webkit-text-stroke:0.15px #fff'>|</div>
<div class="t" style='left:614.0px;top:558px;font-size:10px;font-weight:normal;color:#fff;letter-spacing:0px;line-height:10px;-webkit-text-stroke:0.15px #fff'>|</div>
<div class="t" style='left:662.0px;top:558px;font-size:10px;font-weight:normal;color:#fff;letter-spacing:0px;line-height:10px;-webkit-text-stroke:0.15px #fff'>|</div>
<div class="t" style='left:734.8px;top:558px;font-size:10px;font-weight:normal;color:#fff;letter-spacing:0px;line-height:10px;-webkit-text-stroke:0.15px #fff'>|</div></div></body></html>
